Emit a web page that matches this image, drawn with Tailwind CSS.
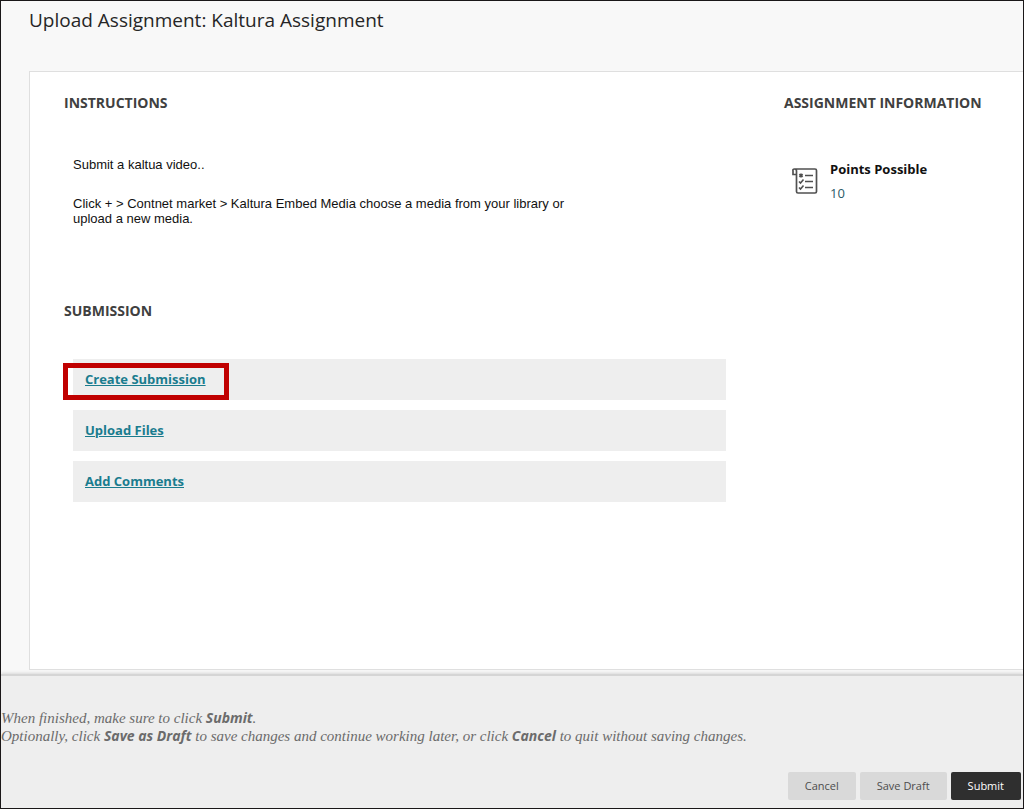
<!DOCTYPE html>
<html lang="en">
<head>
<meta charset="utf-8">
<meta name="viewport" content="width=device-width, initial-scale=1">
<title>Upload Assignment: Kaltura Assignment</title>
<script src="https://cdn.jsdelivr.net/npm/@tailwindcss/browser@4"></script>
</head>
<body class="flex min-h-screen flex-col border border-[#1a1718] bg-[#f8f8f8] font-['Open_Sans',sans-serif] text-[13px] text-[#111111]">
  <header class="px-7 pt-1 pb-9">
    <h1 class="text-[19px] leading-[30px] text-[#262626]">Upload Assignment: Kaltura Assignment</h1>
  </header>

  <main class="ml-7 flex grow border border-r-0 border-[#dfdfdf] bg-white pt-[19px] pl-[34px]">
    <div class="w-[662px] shrink">
      <section>
        <h2 class="text-[14px] leading-6 font-bold text-[#404040]">INSTRUCTIONS</h2>
        <div class="mt-[42px] ml-[9px] max-w-[520px] font-['Liberation_Sans',Arial,sans-serif] text-[13px] leading-[15px]">
          <p>Submit a kaltua video..</p>
          <p class="mt-6">Click + &gt; Contnet market &gt; Kaltura Embed Media choose a media from your library or upload a new media.</p>
        </div>
      </section>

      <section class="mt-[73px]">
        <h2 class="text-[14px] leading-6 font-bold text-[#404040]">SUBMISSION</h2>
        <ul class="mt-9 ml-[9px] flex flex-col gap-[10px] font-bold text-[#1a7c8e]">
          <li class="relative flex h-[41px] items-center bg-[#eeeeee] px-3">
            <a href="#create" class="underline">Create Submission</a>
            <span class="pointer-events-none absolute top-1 -left-[10px] h-[37px] w-[166px] border-[5px] border-[#c00000]"></span>
          </li>
          <li class="flex h-[41px] items-center bg-[#eeeeee] px-3"><a href="#files" class="underline">Upload Files</a></li>
          <li class="flex h-[41px] items-center bg-[#eeeeee] px-3"><a href="#comments" class="underline">Add Comments</a></li>
        </ul>
      </section>
    </div>

    <aside class="ml-[58px] shrink-0">
      <h2 class="text-[14px] leading-6 font-bold text-[#404040]">ASSIGNMENT INFORMATION</h2>
      <div class="mt-[42px] ml-2 flex gap-3">
        <svg class="mt-[10px] h-7 w-[26px]" viewBox="0 0 26 28" fill="none" stroke="#505050" aria-hidden="true">
          <path d="M2.500 2H23Q24.500 2 24.500 3.500V24.500Q24.500 26 23 26H6Q4.500 26 4.500 24.500V4Q4.500 2 2.500 2T1 4V7.500H4.500" stroke-width="1.700"/>
          <path d="M13 8.500H21M13 14.500H21M13 20.500H21" stroke-width="1.600"/>
          <path d="M7 14.500L8.500 16L11.500 12.500M7 20.500L8.500 22L11.500 18.500" stroke-width="1.600"/>
          <path d="M7.500 7L10.500 10M10.500 7L7.500 10" stroke-width="2"/>
        </svg>
        <dl class="leading-6">
          <dt class="font-bold">Points Possible</dt>
          <dd class="text-[#2b5a68]">10</dd>
        </dl>
      </div>
    </aside>
  </main>

  <footer class="mt-1 border-t-2 border-[#d5d5d5] bg-[#eeeeee] shadow-[0_-1px_3px_#d8d8d8]">
    <p class="mt-[33px] font-['Georgia','Liberation_Serif',serif] text-[15px] leading-[18px] text-[#6b6b6b] italic">
      When finished, make sure to click <strong class="font-['Open_Sans',sans-serif] text-[14px] font-bold">Submit</strong>.<br>
      Optionally, click <strong class="font-['Open_Sans',sans-serif] text-[14px] font-bold">Save as Draft</strong> to save changes and continue working later, or click <strong class="font-['Open_Sans',sans-serif] text-[14px] font-bold">Cancel</strong> to quit without saving changes.
    </p>
    <div class="mt-[27px] mb-2 flex justify-end gap-1 pr-0.5 text-[11px]">
      <button type="button" class="h-7 rounded-xs bg-[#d9d9d9] px-[17px] text-[#4d4d4d]">Cancel</button>
      <button type="button" class="h-7 rounded-xs bg-[#d9d9d9] px-[17px] text-[#4d4d4d]">Save Draft</button>
      <button type="submit" class="h-7 rounded-xs bg-[#2f2f2f] px-[17px] text-white">Submit</button>
    </div>
  </footer>
</body>
</html>
